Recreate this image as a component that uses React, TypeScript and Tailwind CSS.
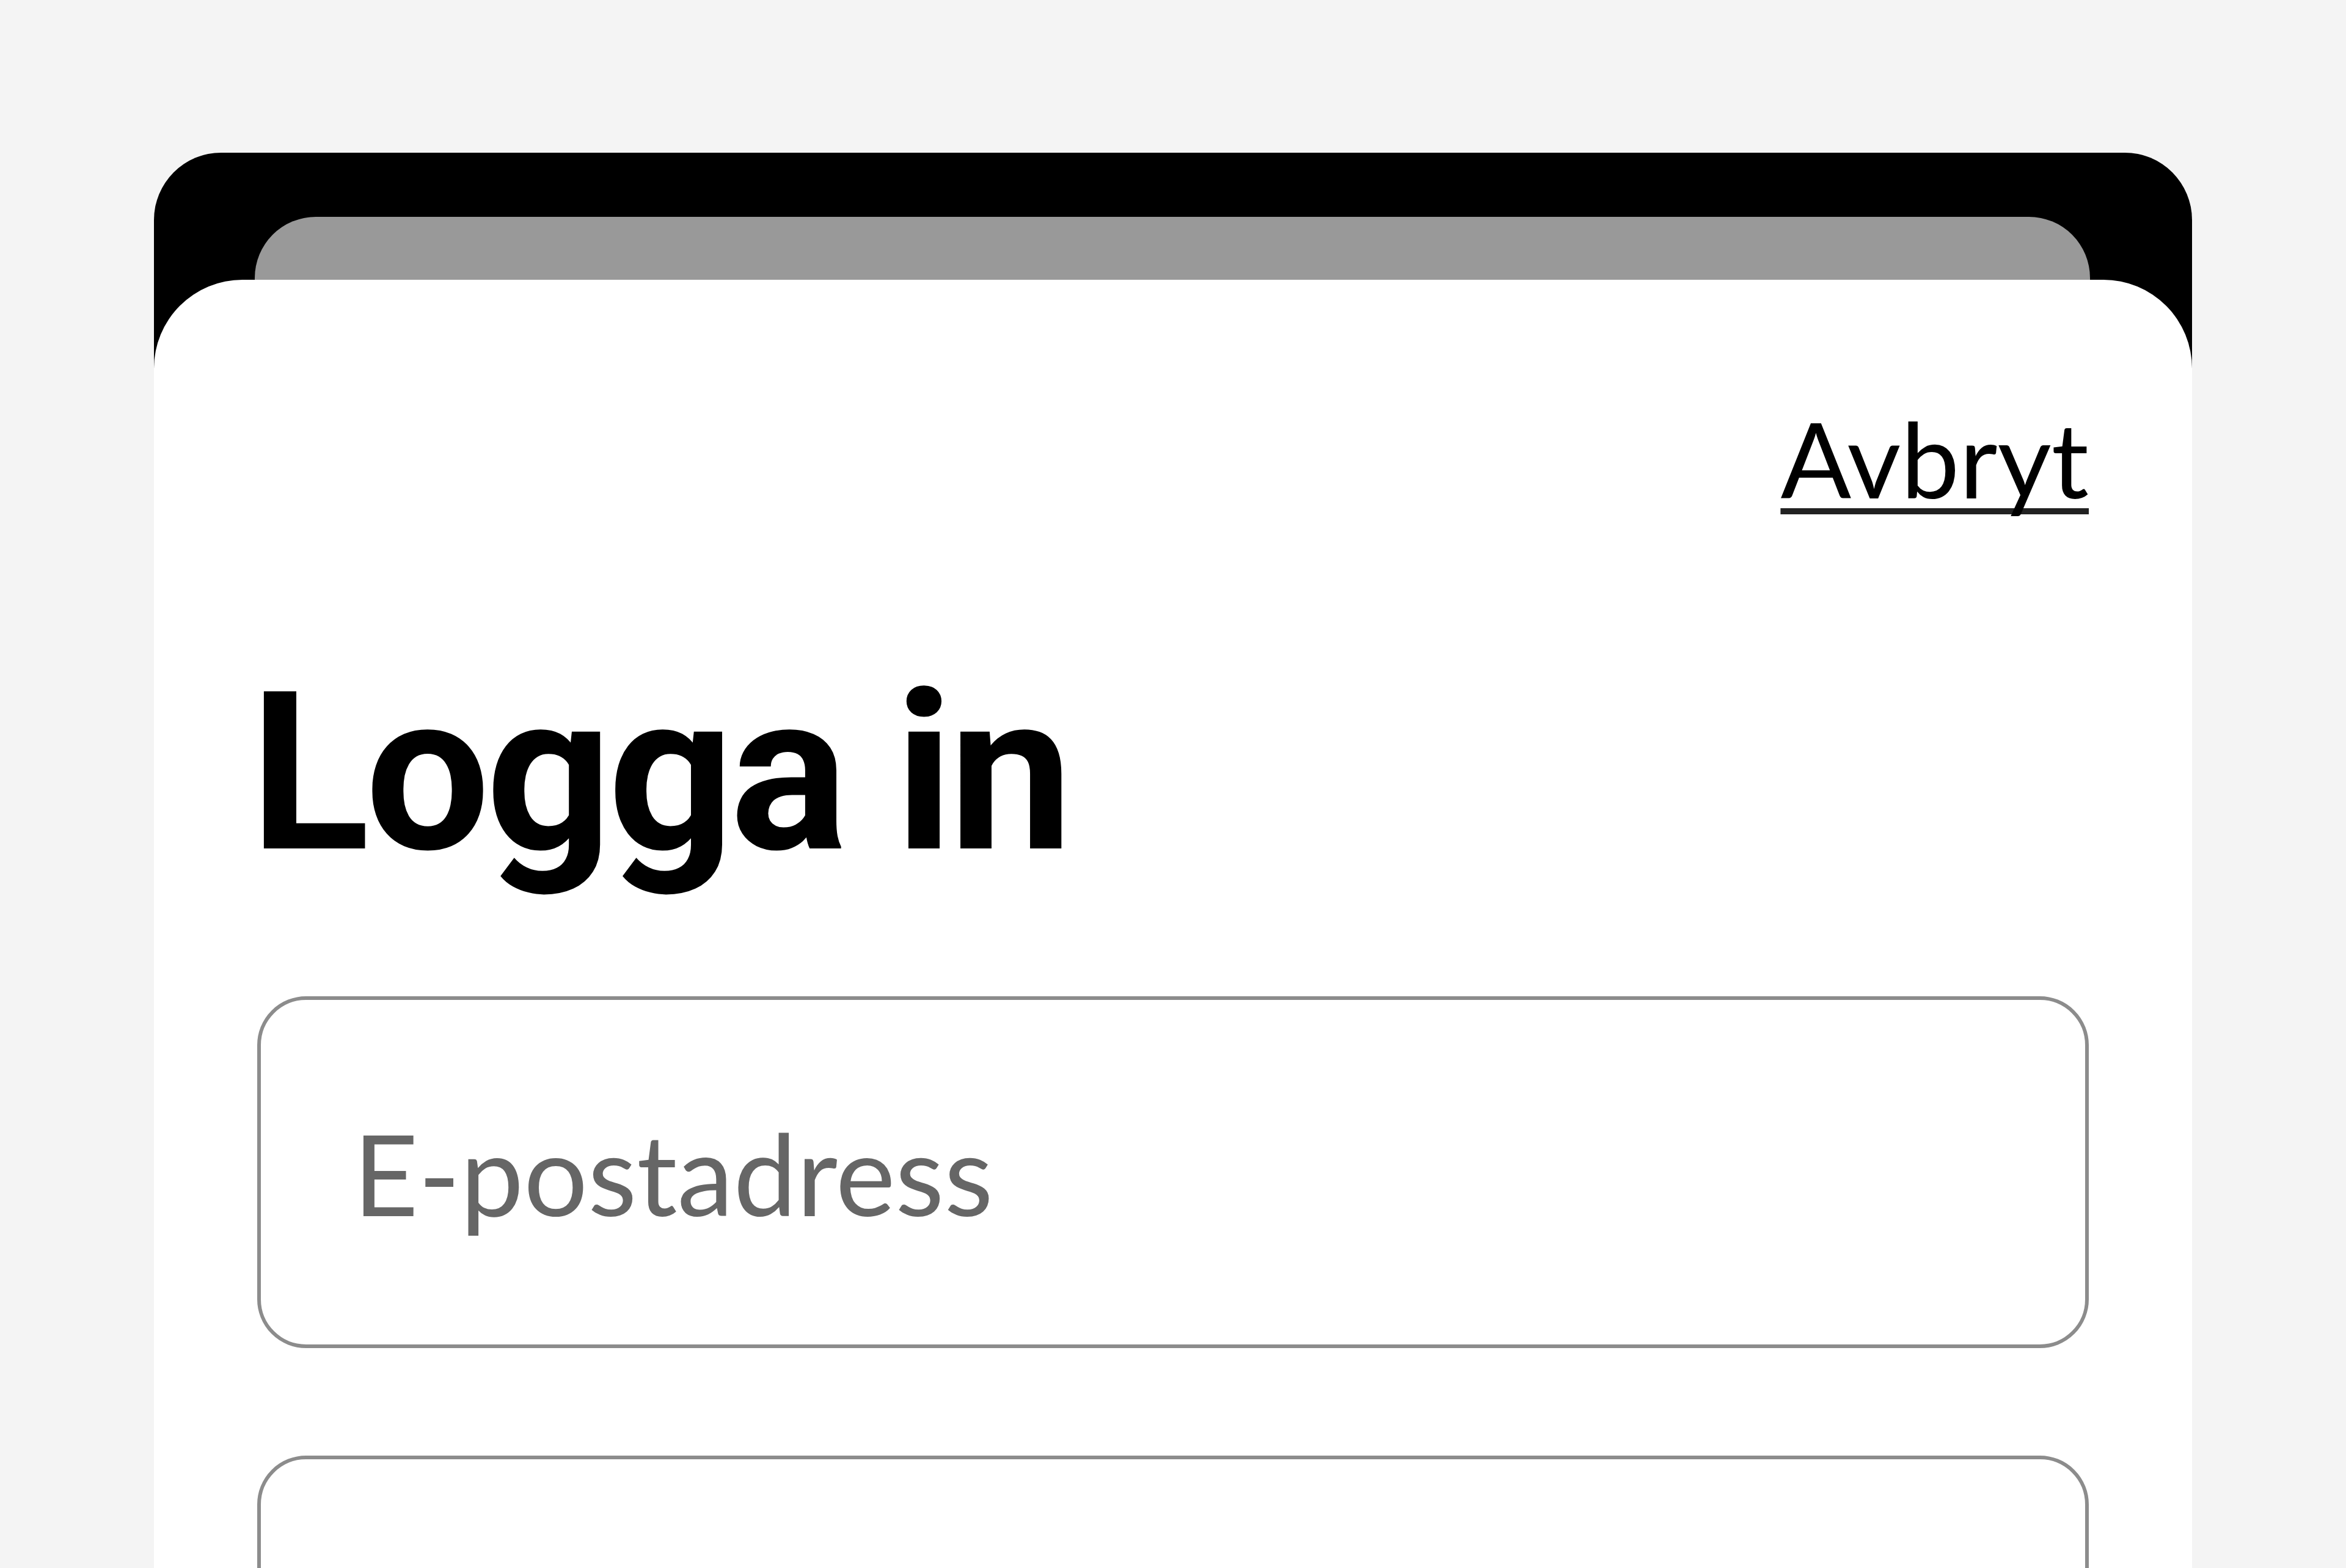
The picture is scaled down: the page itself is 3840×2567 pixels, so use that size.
export default function App() {
  return (
    <div className="h-[2567px] overflow-hidden bg-[#f4f4f4] px-[252px] pt-[250px] font-[Lato,sans-serif]">
      <div className="h-[2400px] rounded-t-[110px] bg-black pt-[105px]">
        {/* stacked sheet behind */}
        <div className="ml-[165px] mr-[167px] h-[103px] rounded-t-[100px] bg-[#999999]" />

        <div className="h-[2200px] rounded-t-[145px] bg-white px-[169px] pt-[206px]">
          <div className="flex justify-end">
            <button className="text-[171px] leading-none text-black underline decoration-[#222] decoration-[10px] underline-offset-[16px] [text-decoration-skip-ink:none]">
              Avbryt
            </button>
          </div>

          <h1 className="-ml-[12px] mt-[249px] font-[Roboto,sans-serif] text-[362px] font-bold leading-none tracking-[-7px] text-black">
            Logga in
          </h1>

          <input
            type="email"
            placeholder="E-postadress"
            className="mt-[185px] block h-[576px] w-full rounded-[80px] border-[6px] border-[#8c8c8c] bg-white pl-[151px] text-[185px] text-black outline-none placeholder:text-[#666666]"
          />

          <input
            type="password"
            placeholder=""
            className="mt-[176px] block h-[576px] w-full rounded-[80px] border-[6px] border-[#8c8c8c] bg-white pl-[151px] text-[185px] text-black outline-none placeholder:text-[#666666]"
          />
        </div>
      </div>
    </div>
  );
}
